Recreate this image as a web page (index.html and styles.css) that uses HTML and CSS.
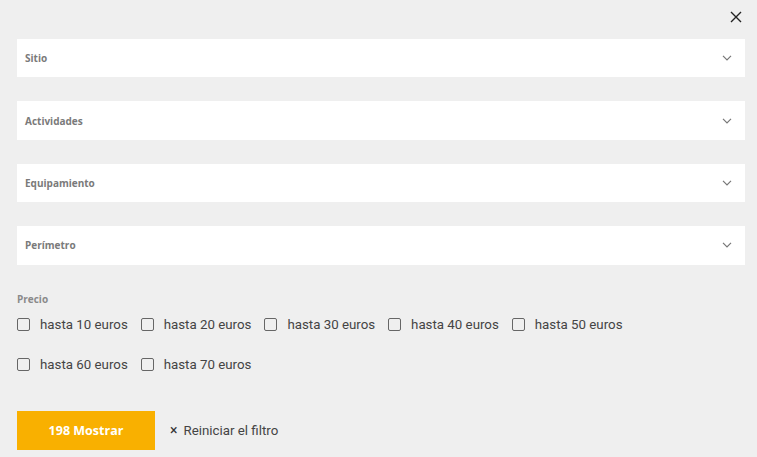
FILE: index.html
```html
<!DOCTYPE html>
<html lang="es">
<head>
<meta charset="utf-8">
<link rel="stylesheet" href="styles.css">
</head>
<body>
<div class="filters">
  <div class="top">
    <button class="close" aria-label="Cerrar">
      <svg width="12" height="12" viewBox="0 0 12 12"><path d="M1 1L11 11M11 1L1 11" stroke="#222" stroke-width="1.4" fill="none"/></svg>
    </button>
  </div>
  <div class="panels">
    <div class="panel"><span>Sitio</span><svg class="chev" width="10" height="6" viewBox="0 0 10 6"><path d="M1 0.8L5 4.8L9 0.8" stroke="#777" stroke-width="1.2" fill="none"/></svg></div>
    <div class="panel"><span>Actividades</span><svg class="chev" width="10" height="6" viewBox="0 0 10 6"><path d="M1 0.8L5 4.8L9 0.8" stroke="#777" stroke-width="1.2" fill="none"/></svg></div>
    <div class="panel"><span>Equipamiento</span><svg class="chev" width="10" height="6" viewBox="0 0 10 6"><path d="M1 0.8L5 4.8L9 0.8" stroke="#777" stroke-width="1.2" fill="none"/></svg></div>
    <div class="panel"><span>Perímetro</span><svg class="chev" width="10" height="6" viewBox="0 0 10 6"><path d="M1 0.8L5 4.8L9 0.8" stroke="#777" stroke-width="1.2" fill="none"/></svg></div>
  </div>
  <div class="price">
    <div class="price-title">Precio</div>
    <div class="options">
      <label class="opt"><span class="box"></span>hasta 10 euros</label>
      <label class="opt"><span class="box"></span>hasta 20 euros</label>
      <label class="opt"><span class="box"></span>hasta 30 euros</label>
      <label class="opt"><span class="box"></span>hasta 40 euros</label>
      <label class="opt"><span class="box"></span>hasta 50 euros</label>
      <label class="opt"><span class="box"></span>hasta 60 euros</label>
      <label class="opt"><span class="box"></span>hasta 70 euros</label>
    </div>
  </div>
  <div class="actions">
    <button class="show">198 Mostrar</button>
    <button class="reset"><span class="x">×</span>Reiniciar el filtro</button>
  </div>
</div>
</body>
</html>
```

FILE: styles.css
```css
html, body {
  margin: 0;
  padding: 0;
  background: #efefef;
}
body {
  font-family: Roboto, "Liberation Sans", sans-serif;
  color: #444;
}
.filters {
  padding: 0 12px 0 17px;
}
.top {
  height: 39px;
  display: flex;
  justify-content: flex-end;
  align-items: flex-start;
}
.close {
  margin-top: 11px;
  margin-right: 3px;
  padding: 0;
  border: 0;
  background: none;
  width: 12px;
  height: 12px;
  display: flex;
}
.panels {
  display: flex;
  flex-direction: column;
  gap: 24px;
}
.panel {
  height: 38.4px;
  background: #fff;
  display: flex;
  align-items: center;
  justify-content: space-between;
  padding: 0 13px 0 8px;
  font-family: "Open Sans", sans-serif;
  font-weight: 700;
  font-size: 10px;
  color: #7a7a7a;
}
.price {
  margin-top: 27px;
}
.price-title {
  font-family: "Open Sans", sans-serif;
  font-weight: 700;
  font-size: 10px;
  color: #8a8a8a;
  height: 14px;
  line-height: 14px;
}
.options {
  display: flex;
  flex-wrap: wrap;
  width: 640px;
  row-gap: 22px;
  margin-top: 10px;
}
.opt {
  width: 123.7px;
  display: flex;
  align-items: center;
  height: 18px;
  font-size: 13.3px;
  color: #444;
}
.box {
  width: 11px;
  height: 11px;
  border: 1.5px solid #666;
  border-radius: 2px;
  margin-right: 10px;
  flex: none;
}
.actions {
  margin-top: 37px;
  display: flex;
  align-items: center;
}
.show {
  width: 138px;
  height: 39px;
  border: 0;
  background: #f9b000;
  color: #fff;
  font-family: "Open Sans", sans-serif;
  font-weight: 700;
  font-size: 12.5px;
  padding: 0;
}
.reset {
  margin-left: 15px;
  border: 0;
  background: none;
  font-family: Roboto, sans-serif;
  font-size: 13.3px;
  color: #444;
  display: flex;
  align-items: center;
  padding: 0;
}
.x {
  font-size: 14px;
  margin-right: 6px;
  color: #333;
}
```
